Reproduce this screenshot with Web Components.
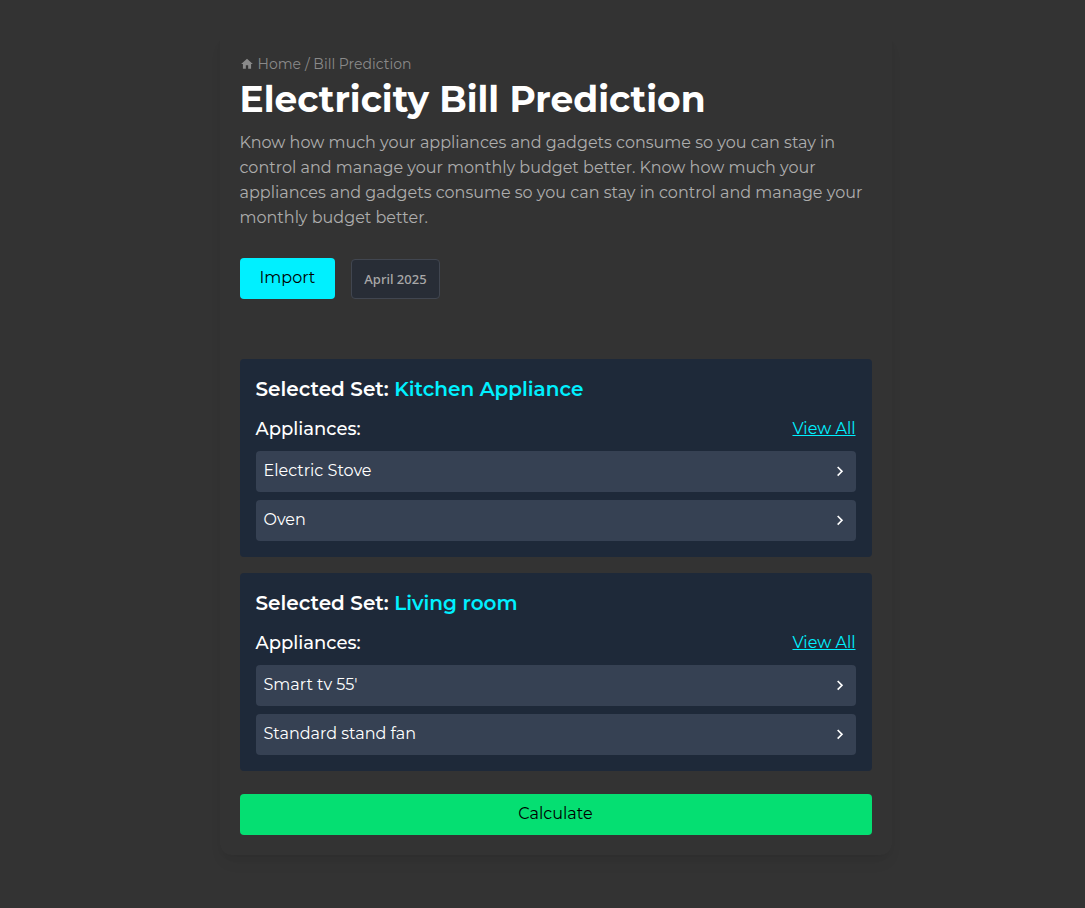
<!DOCTYPE html>
<html lang="en">
<head>
<meta charset="utf-8">
<meta name="viewport" content="width=device-width, initial-scale=1">
<title>Electricity Bill Prediction</title>
<style>
  body {
    margin: 0;
    min-height: 100vh;
    box-sizing: border-box;
    padding: 32px 0 52px 26px;
    background: #333;
    color: #fff;
    font: 16px/25px Montserrat, Inter, sans-serif;
    --accent: #00f0ff;
    --go: #05df72;
  }
</style>
</head>
<body>
<bill-page>
  <bread-crumb slot="crumbs" current="Bill Prediction"></bread-crumb>
  <span slot="title">Electricity Bill Prediction</span>
  <span slot="intro">Know how much your appliances and gadgets consume so you can stay in control and manage your monthly budget better. Know how much your appliances and gadgets consume so you can stay in control and manage your monthly budget better.</span>
  <action-button slot="tools">Import</action-button>
  <month-picker slot="tools">April 2025</month-picker>
  <appliance-set name="Kitchen Appliance">
    <appliance-row>Electric Stove</appliance-row>
    <appliance-row>Oven</appliance-row>
  </appliance-set>
  <appliance-set name="Living room">
    <appliance-row>Smart tv 55'</appliance-row>
    <appliance-row>Standard stand fan</appliance-row>
  </appliance-set>
  <action-button slot="submit" variant="go">Calculate</action-button>
</bill-page>
<script>
class Base extends HTMLElement {
  connectedCallback() {
    if (this.shadowRoot) return;
    this.attachShadow({ mode: 'open' }).innerHTML = this.render();
  }
}

customElements.define('bread-crumb', class extends Base {
  render() {
    return `<style>
      :host { display: block; color: #8a8a8a; font-size: 14px; line-height: 20px; }
      nav { display: flex; align-items: center; gap: 4px; }
      a { display: flex; align-items: center; gap: 4px; color: inherit; text-decoration: none; }
      svg { width: 14px; height: 14px; fill: currentColor; }
    </style>
    <nav aria-label="Breadcrumb">
      <a href="#home"><svg viewBox="0 0 24 24" aria-hidden="true"><path d="M10 20v-6h4v6h5v-8h3L12 3 2 12h3v8z"/></svg>Home</a>
      <span>/ ${this.getAttribute('current')}</span>
    </nav>`;
  }
});

customElements.define('action-button', class extends Base {
  render() {
    return `<style>
      :host { display: block; }
      button { width: 100%; border: 0; border-radius: 4px; padding: 8px 20px 9px; background: var(--accent);
        color: #000; font: inherit; line-height: 24px; cursor: pointer; }
      :host([variant="go"]) button { background: var(--go); }
    </style><button type="button"><slot></slot></button>`;
  }
});

customElements.define('month-picker', class extends Base {
  render() {
    return `<style>
      :host { display: block; }
      button { display: block; border: 1px solid #414650; border-radius: 4px; padding: 9px 12px; background: #282d36;
        color: #a8a8a8; font: 500 13px/20px "Segoe UI", "Noto Sans", sans-serif; cursor: pointer; }
    </style><button type="button" aria-label="Billing month"><slot></slot></button>`;
  }
});

customElements.define('appliance-row', class extends Base {
  render() {
    return `<style>
      :host { display: block; }
      button { display: flex; align-items: center; justify-content: space-between; width: 100%; border: 0;
        border-radius: 4px; padding: 8px 8px 9px; background: #364153; color: #fff; font: inherit; line-height: 24px;
        text-align: left; cursor: pointer; }
      svg { width: 16px; height: 16px; fill: none; stroke: currentColor; stroke-width: 2.4; }
    </style>
    <button type="button"><span><slot></slot></span>
      <svg viewBox="0 0 24 24" aria-hidden="true"><path d="m8.5 6 6.5 6.5L8.5 19"/></svg>
    </button>`;
  }
});

customElements.define('appliance-set', class extends Base {
  render() {
    return `<style>
      :host { display: block; padding: 16px; border-radius: 4px; background: #1e2939; }
      h2, h3 { margin: 0; line-height: 28px; }
      h2 { font-size: 20px; font-weight: 600; }
      h2 span, a { color: var(--accent); }
      a { line-height: 24px; }
      header { display: flex; align-items: center; justify-content: space-between; margin: 12px 0 8px; }
      h3 { font-size: 18px; font-weight: 500; }
      .list { display: grid; gap: 8px; }
    </style>
    <h2>Selected Set: <span>${this.getAttribute('name')}</span></h2>
    <header><h3>Appliances:</h3><a href="#all">View All</a></header>
    <div class="list"><slot></slot></div>`;
  }
});

customElements.define('bill-page', class extends Base {
  render() {
    return `<style>
      :host { display: block; box-sizing: border-box; max-width: 672px; margin: 0 auto; padding: 22px 20px 20px;
        border-radius: 12px; box-shadow: 0 10px 15px -3px rgb(0 0 0 / .06), 0 4px 6px -2px rgb(0 0 0 / .05); }
      h1 { margin: 5px 0 11px; font-size: 36px; line-height: 40px; font-weight: 700; }
      p { margin: 0; color: #adadad; }
      .tools { display: flex; align-items: center; gap: 16px; margin: 28px 0 60px; }
      .sets { display: grid; gap: 16px; margin-bottom: 23px; }
    </style>
    <slot name="crumbs"></slot>
    <h1><slot name="title"></slot></h1>
    <p><slot name="intro"></slot></p>
    <div class="tools"><slot name="tools"></slot></div>
    <div class="sets"><slot></slot></div>
    <slot name="submit"></slot>`;
  }
});
</script>
</body>
</html>
